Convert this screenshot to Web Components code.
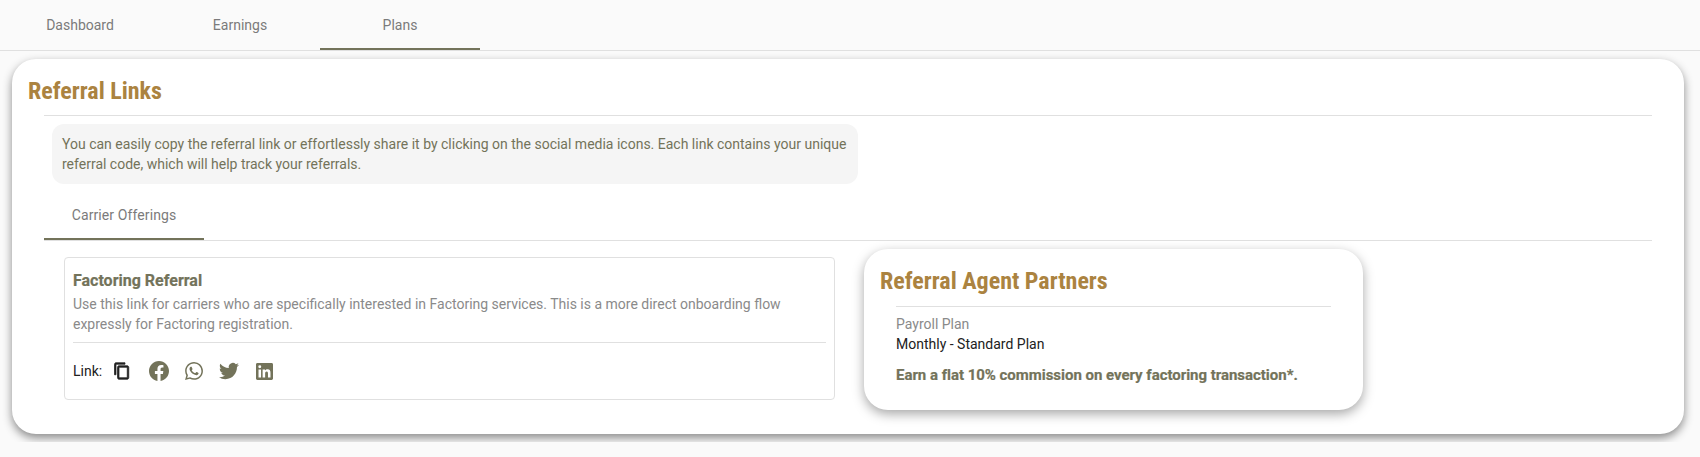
<!DOCTYPE html>
<html>
<head>
<meta charset="utf-8">
<style>
  html, body { margin: 0; height: 457px; overflow: hidden; background: #fafafa; font-family: Roboto, "Liberation Sans", sans-serif; }
</style>
</head>
<body>
<plans-page></plans-page>

<script>
const ICONS = {
  copy: '<path stroke="currentColor" stroke-width="1" d="M16 1H4c-1.1 0-2 .9-2 2v14h2V3h12V1zm3 4H8c-1.1 0-2 .9-2 2v14c0 1.1.9 2 2 2h11c1.1 0 2-.9 2-2V7c0-1.1-.9-2-2-2zm0 16H8V7h11v14z"/>',
  facebook: '<path d="M24 12.07C24 5.4 18.63 0 12 0S0 5.4 0 12.07c0 6.03 4.39 11.02 10.13 11.93v-8.44H7.08v-3.49h3.05V9.41c0-3.02 1.79-4.69 4.53-4.69 1.31 0 2.68.24 2.68.24v2.97h-1.51c-1.49 0-1.96.93-1.96 1.89v2.25h3.33l-.53 3.49h-2.8V24C19.61 23.09 24 18.1 24 12.07z"/>',
  whatsapp: '<path d="M17.47 14.38c-.3-.15-1.76-.87-2.03-.97-.27-.1-.47-.15-.67.15-.2.3-.77.97-.94 1.16-.17.2-.35.22-.64.07-.3-.15-1.26-.46-2.39-1.48-.88-.79-1.48-1.76-1.65-2.06-.17-.3-.02-.46.13-.61.13-.13.3-.35.45-.52.15-.17.2-.3.3-.5.1-.2.05-.37-.02-.52-.08-.15-.67-1.61-.92-2.21-.24-.58-.49-.5-.67-.51l-.57-.01c-.2 0-.52.07-.79.37-.27.3-1.04 1.02-1.04 2.48 0 1.46 1.07 2.88 1.21 3.07.15.2 2.1 3.2 5.08 4.49.71.31 1.26.49 1.69.63.71.22 1.36.19 1.87.12.57-.09 1.76-.72 2.01-1.41.25-.7.25-1.29.17-1.41-.07-.13-.27-.2-.57-.35zM12.05 21.79h-.01a9.87 9.87 0 0 1-5.03-1.38l-.36-.21-3.74.98 1-3.65-.24-.37a9.86 9.86 0 0 1-1.51-5.26c0-5.45 4.44-9.88 9.89-9.88 2.64 0 5.12 1.03 6.99 2.9a9.83 9.83 0 0 1 2.89 6.99c0 5.45-4.44 9.88-9.88 9.88zM20.46 3.49A11.82 11.82 0 0 0 12.05 0C5.5 0 .16 5.34.16 11.89c0 2.1.55 4.14 1.59 5.95L.06 24l6.3-1.65a11.88 11.88 0 0 0 5.68 1.45h.01c6.55 0 11.89-5.34 11.89-11.89 0-3.18-1.24-6.16-3.48-8.41z"/>',
  twitter: '<path d="M23.95 4.57a10 10 0 0 1-2.83.79 4.96 4.96 0 0 0 2.17-2.72c-.95.56-2.01.97-3.13 1.2a4.92 4.92 0 0 0-8.38 4.48C7.69 8.1 4.07 6.13 1.64 3.16a4.82 4.82 0 0 0-.67 2.48c0 1.71.87 3.21 2.19 4.1a4.9 4.9 0 0 1-2.23-.62v.06a4.92 4.92 0 0 0 3.95 4.83 5 5 0 0 1-2.21.08 4.94 4.94 0 0 0 4.6 3.42A9.87 9.87 0 0 1 0 19.54a14 14 0 0 0 7.56 2.21c9.05 0 14-7.5 14-13.98 0-.21 0-.42-.02-.63a9.94 9.94 0 0 0 2.46-2.55z"/>',
  linkedin: '<path d="M22 0H2C.9 0 0 .9 0 2v20c0 1.1.9 2 2 2h20c1.1 0 2-.9 2-2V2c0-1.1-.9-2-2-2zM7.12 20.45H3.56V9h3.56v11.45zM5.34 7.43a2.06 2.06 0 1 1 0-4.13 2.06 2.06 0 0 1 0 4.13zm15.11 13.02h-3.55v-5.57c0-1.33-.03-3.04-1.85-3.04-1.85 0-2.14 1.45-2.14 2.94v5.67H9.35V9h3.41v1.56h.05c.48-.9 1.64-1.85 3.37-1.85 3.6 0 4.27 2.37 4.27 5.46v6.28z"/>'
};

class NavTabs extends HTMLElement {
  connectedCallback() {
    this.attachShadow({ mode: 'open' });
    this.shadowRoot.innerHTML = `
      <style>
        :host { display: flex; box-sizing: border-box; height: var(--tabs-h, 51px); border-bottom: 1px solid #e0e0e0; }
      </style>
      <slot></slot>`;
  }
}

class NavTab extends HTMLElement {
  connectedCallback() {
    this.attachShadow({ mode: 'open' });
    this.shadowRoot.innerHTML = `
      <style>
        :host { display: flex; box-sizing: border-box; width: 160px; height: 100%; padding-top: var(--tab-pad, 2px); letter-spacing: var(--tab-ls, 0); align-items: center; justify-content: center; font-size: 14px; color: #7b7b7b; border-bottom: 2px solid transparent; }
        :host([active]) { border-bottom-color: #73735a; }
      </style>
      <slot></slot>`;
  }
}

class PanelTitle extends HTMLElement {
  connectedCallback() {
    this.attachShadow({ mode: 'open' });
    this.shadowRoot.innerHTML = `
      <style>
        :host { display: block; color: #ab8340; font-family: "Roboto Condensed", "Liberation Sans Narrow", Roboto, sans-serif; font-stretch: condensed; font-weight: 700; font-size: 24px; line-height: 32px; }
      </style>
      <slot></slot>`;
  }
}

class SocialIcon extends HTMLElement {
  connectedCallback() {
    const size = this.getAttribute('size') || 20;
    this.attachShadow({ mode: 'open' });
    this.shadowRoot.innerHTML = `
      <style>
        :host { display: inline-flex; color: #73735a; }
        :host([dark]) { color: #212121; }
        svg { display: block; fill: currentColor; }
      </style>
      <svg width="${size}" height="${size}" viewBox="0 0 24 24">${ICONS[this.getAttribute('name')]}</svg>`;
  }
}

class ReferralCard extends HTMLElement {
  connectedCallback() {
    this.attachShadow({ mode: 'open' });
    this.shadowRoot.innerHTML = `
      <style>
        :host { display: block; box-sizing: border-box; width: 771px; height: 143px; margin: 16px 0 0 20px; padding: 13px 8px 0; border: 1px solid #e0e0e0; border-radius: 4px; }
        h3 { margin: 0 0 3px; font-size: 16px; line-height: 20px; font-weight: 700; color: #73735a; -webkit-text-stroke: .2px #73735a; }
        p { margin: 0; font-size: 14px; line-height: 20px; color: #8a8a8a; }
        hr { border: 0; border-top: 1px solid #e0e0e0; margin: 8px 0 0; }
        .links { display: flex; align-items: center; margin-top: 18px; font-size: 14px; color: #212121; }
        .links span { margin-right: 11px; }
        .fb { margin-left: 18px; }
        .gap { margin-left: 16px; }
        .li { margin-left: 17px; }
      </style>
      <h3>Factoring Referral</h3>
      <p>Use this link for carriers who are specifically interested in Factoring services. This is a more direct onboarding flow expressly for Factoring registration.</p>
      <hr>
      <div class="links">
        <span>Link:</span>
        <social-icon name="copy" size="18" dark></social-icon>
        <social-icon class="fb" name="facebook" size="20"></social-icon>
        <social-icon class="gap" name="whatsapp" size="18"></social-icon>
        <social-icon class="gap" name="twitter" size="20"></social-icon>
        <social-icon class="li" name="linkedin" size="17"></social-icon>
      </div>`;
  }
}

class AgentCard extends HTMLElement {
  connectedCallback() {
    this.attachShadow({ mode: 'open' });
    this.shadowRoot.innerHTML = `
      <style>
        :host { display: block; box-sizing: border-box; width: 499px; height: 161px; margin: 8px 0 0 29px; padding: 16px 16px 0; background: #fff; border-radius: 24px; box-shadow: 0 4px 12px rgba(0,0,0,.35); }
        hr { border: 0; border-top: 1px solid #e0e0e0; margin: 9px 16px 0 16px; }
        .body { padding-left: 16px; }
        .label { margin-top: 7px; font-size: 14px; line-height: 20px; color: #8a8a8a; }
        .value { font-size: 14px; line-height: 20px; color: #212121; }
        .note { margin-top: 11px; font-size: 15px; line-height: 20px; letter-spacing: -.03px; font-weight: 700; color: #73735a; -webkit-text-stroke: .2px #73735a; }
      </style>
      <panel-title>Referral Agent Partners</panel-title>
      <hr>
      <div class="body">
        <div class="label">Payroll Plan</div>
        <div class="value">Monthly - Standard Plan</div>
        <div class="note">Earn a flat 10% commission on every factoring transaction*.</div>
      </div>`;
  }
}

class ReferralPanel extends HTMLElement {
  connectedCallback() {
    this.attachShadow({ mode: 'open' });
    this.shadowRoot.innerHTML = `
      <style>
        :host { display: block; box-sizing: border-box; height: 375px; margin: 8px 16px 0 12px; padding: 16px 32px 0 16px; background: #fff; border-radius: 24px; box-shadow: 0 4px 10px rgba(0,0,0,.45); }
        .rule { border-top: 1px solid #e0e0e0; margin-left: 16px; margin-top: 8px; }
        .info { box-sizing: border-box; width: 806px; height: 60px; margin: 8px 0 0 24px; padding: 10px; background: #f5f5f5; border-radius: 12px; font-size: 14px; line-height: 20px; color: #73735a; }
        nav-tabs { --tabs-h: 57px; --tab-pad: 8px; --tab-ls: .1px; margin-left: 16px; }
        .row { display: flex; align-items: flex-start; margin-left: 16px; }
      </style>
      <panel-title>Referral Links</panel-title>
      <div class="rule"></div>
      <div class="info">You can easily copy the referral link or effortlessly share it by clicking on the social media icons. Each link contains your unique referral code, which will help track your referrals.</div>
      <nav-tabs><nav-tab active>Carrier Offerings</nav-tab></nav-tabs>
      <div class="row">
        <referral-card></referral-card>
        <agent-card></agent-card>
      </div>`;
  }
}

class PlansPage extends HTMLElement {
  connectedCallback() {
    this.attachShadow({ mode: 'open' });
    this.shadowRoot.innerHTML = `
      <style>
        :host { display: block; height: 442px; overflow: hidden; }
      </style>
      <nav-tabs>
        <nav-tab>Dashboard</nav-tab>
        <nav-tab>Earnings</nav-tab>
        <nav-tab active>Plans</nav-tab>
      </nav-tabs>
      <referral-panel></referral-panel>`;
  }
}

customElements.define('nav-tabs', NavTabs);
customElements.define('nav-tab', NavTab);
customElements.define('panel-title', PanelTitle);
customElements.define('social-icon', SocialIcon);
customElements.define('referral-card', ReferralCard);
customElements.define('agent-card', AgentCard);
customElements.define('referral-panel', ReferralPanel);
customElements.define('plans-page', PlansPage);
</script>
</body>
</html>
